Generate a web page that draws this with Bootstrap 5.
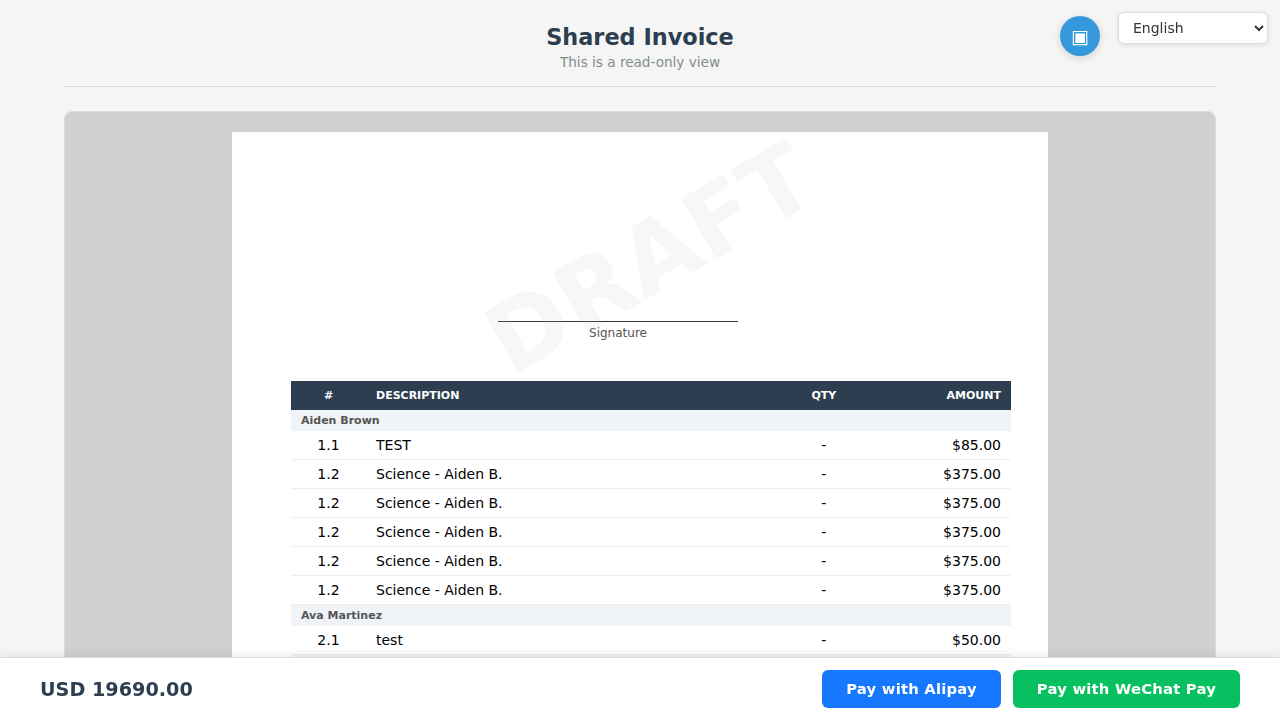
<!DOCTYPE html>
<html lang="en">
<head>
<meta charset="utf-8">
<meta name="viewport" content="width=device-width, initial-scale=1">
<title>Shared Invoice</title>
<link href="https://cdn.jsdelivr.net/npm/bootstrap@5.3.0/dist/css/bootstrap.min.css" rel="stylesheet">
<style>
body{font-family:"DejaVu Sans",sans-serif;background:#f5f5f5;color:#000;height:100vh;overflow:hidden}
.shell{width:1152px;height:100vh;overflow:hidden}
.page-head{height:87px;padding-top:23px;border-bottom:1px solid #ddd}
.page-head h1{font-size:22.4px;line-height:29px;color:#2c3e50}
.page-head p{font-size:13.6px;line-height:20px;color:#7f8c8d}
.viewer{margin-top:24px;height:900px;padding-top:20px;background:#d0d0d0;border:1px solid #ddd;border-radius:8px}
.sheet{width:816px;height:860px;padding:189px 37px 0 59px}
.signature{width:240px;margin-left:207px;border-top:1px solid #333;font-size:12px;line-height:14px;padding-top:4px;color:#555}
.watermark{left:418px;top:126.5px;transform:translate(-50%,-50%) rotate(-30deg);font-size:96px;line-height:1;color:rgba(200,200,200,.15);pointer-events:none}
.invoice{width:720px;margin-top:41px;table-layout:fixed;border-collapse:separate;border-spacing:0;font-size:14px;line-height:16px}
.invoice th{background:#2c3e50;color:#fff;font-size:11px;line-height:13px;padding:8px 10px;height:29px}
.invoice td{padding:6px 10px;height:29px;border-bottom:1px solid #eee}
.invoice .group-row td{background:#f0f3f8;color:#555;font-size:11px;line-height:13px;font-weight:700;padding:4px 10px;height:21px;border:0}
.c-num{width:75px}.c-qty{width:86px}.c-amt{width:144.2px}
.scan{top:16px;right:180px;width:40px;height:40px;padding:2px 0 0;background:#3498db;color:#fff;font-size:19.2px;box-shadow:0 2px 8px rgba(0,0,0,.15)}
.lang{top:12px;right:12px;width:150px;height:32px;padding:0 10px;border:1px solid #ddd;border-radius:6px;background:#fff;color:#333;font-size:14px;box-shadow:0 1px 4px rgba(0,0,0,.1)}
.paybar{height:63px;padding:0 40px;background:#fff;border-top:1px solid #ddd;box-shadow:0 -2px 10px rgba(0,0,0,.08)}
.total{font-size:19.2px;color:#2c3e50;padding-top:2px}
.pay{height:38px;padding:0 24px;border:0;border-radius:6px;font-size:14.8px;letter-spacing:.2px;font-weight:700;line-height:38px;color:#fff}
.alipay{background:#1677ff}.wechat{background:#07c160}
</style>
</head>
<body>
<button class="scan position-fixed rounded-circle border-0 d-flex align-items-center justify-content-center" type="button">▣</button>
<select class="lang position-fixed" aria-label="Language"><option>English</option></select>

<main class="shell mx-auto">
  <header class="page-head text-center">
    <h1 class="fw-bold m-0">Shared Invoice</h1>
    <p class="m-0">This is a read-only view</p>
  </header>
  <section class="viewer">
    <div class="sheet bg-white mx-auto position-relative">
      <div class="signature text-center">Signature</div>
      <table class="invoice">
        <colgroup><col class="c-num"><col><col class="c-qty"><col class="c-amt"></colgroup>
        <thead><tr><th class="text-center">#</th><th>DESCRIPTION</th><th class="text-center">QTY</th><th class="text-end">AMOUNT</th></tr></thead>
        <tbody>
          <tr class="group-row"><td colspan="4">Aiden Brown</td></tr>
          <tr><td class="text-center">1.1</td><td>TEST</td><td class="text-center">-</td><td class="text-end">$85.00</td></tr>
          <tr><td class="text-center">1.2</td><td>Science - Aiden B.</td><td class="text-center">-</td><td class="text-end">$375.00</td></tr>
          <tr><td class="text-center">1.2</td><td>Science - Aiden B.</td><td class="text-center">-</td><td class="text-end">$375.00</td></tr>
          <tr><td class="text-center">1.2</td><td>Science - Aiden B.</td><td class="text-center">-</td><td class="text-end">$375.00</td></tr>
          <tr><td class="text-center">1.2</td><td>Science - Aiden B.</td><td class="text-center">-</td><td class="text-end">$375.00</td></tr>
          <tr><td class="text-center">1.2</td><td>Science - Aiden B.</td><td class="text-center">-</td><td class="text-end">$375.00</td></tr>
          <tr class="group-row"><td colspan="4">Ava Martinez</td></tr>
          <tr><td class="text-center">2.1</td><td>test</td><td class="text-center">-</td><td class="text-end">$50.00</td></tr>
          <tr class="group-row"><td colspan="4"></td></tr>
        </tbody>
      </table>
      <div class="watermark position-absolute fw-bold">DRAFT</div>
    </div>
  </section>
</main>

<footer class="paybar fixed-bottom d-flex align-items-center justify-content-between">
  <div class="total fw-bold">USD 19690.00</div>
  <div class="d-flex" style="gap:12px">
    <button class="pay alipay" type="button">Pay with Alipay</button>
    <button class="pay wechat" type="button">Pay with WeChat Pay</button>
  </div>
</footer>
<script src="https://cdn.jsdelivr.net/npm/bootstrap@5.3.0/dist/js/bootstrap.bundle.min.js"></script>
</body>
</html>
